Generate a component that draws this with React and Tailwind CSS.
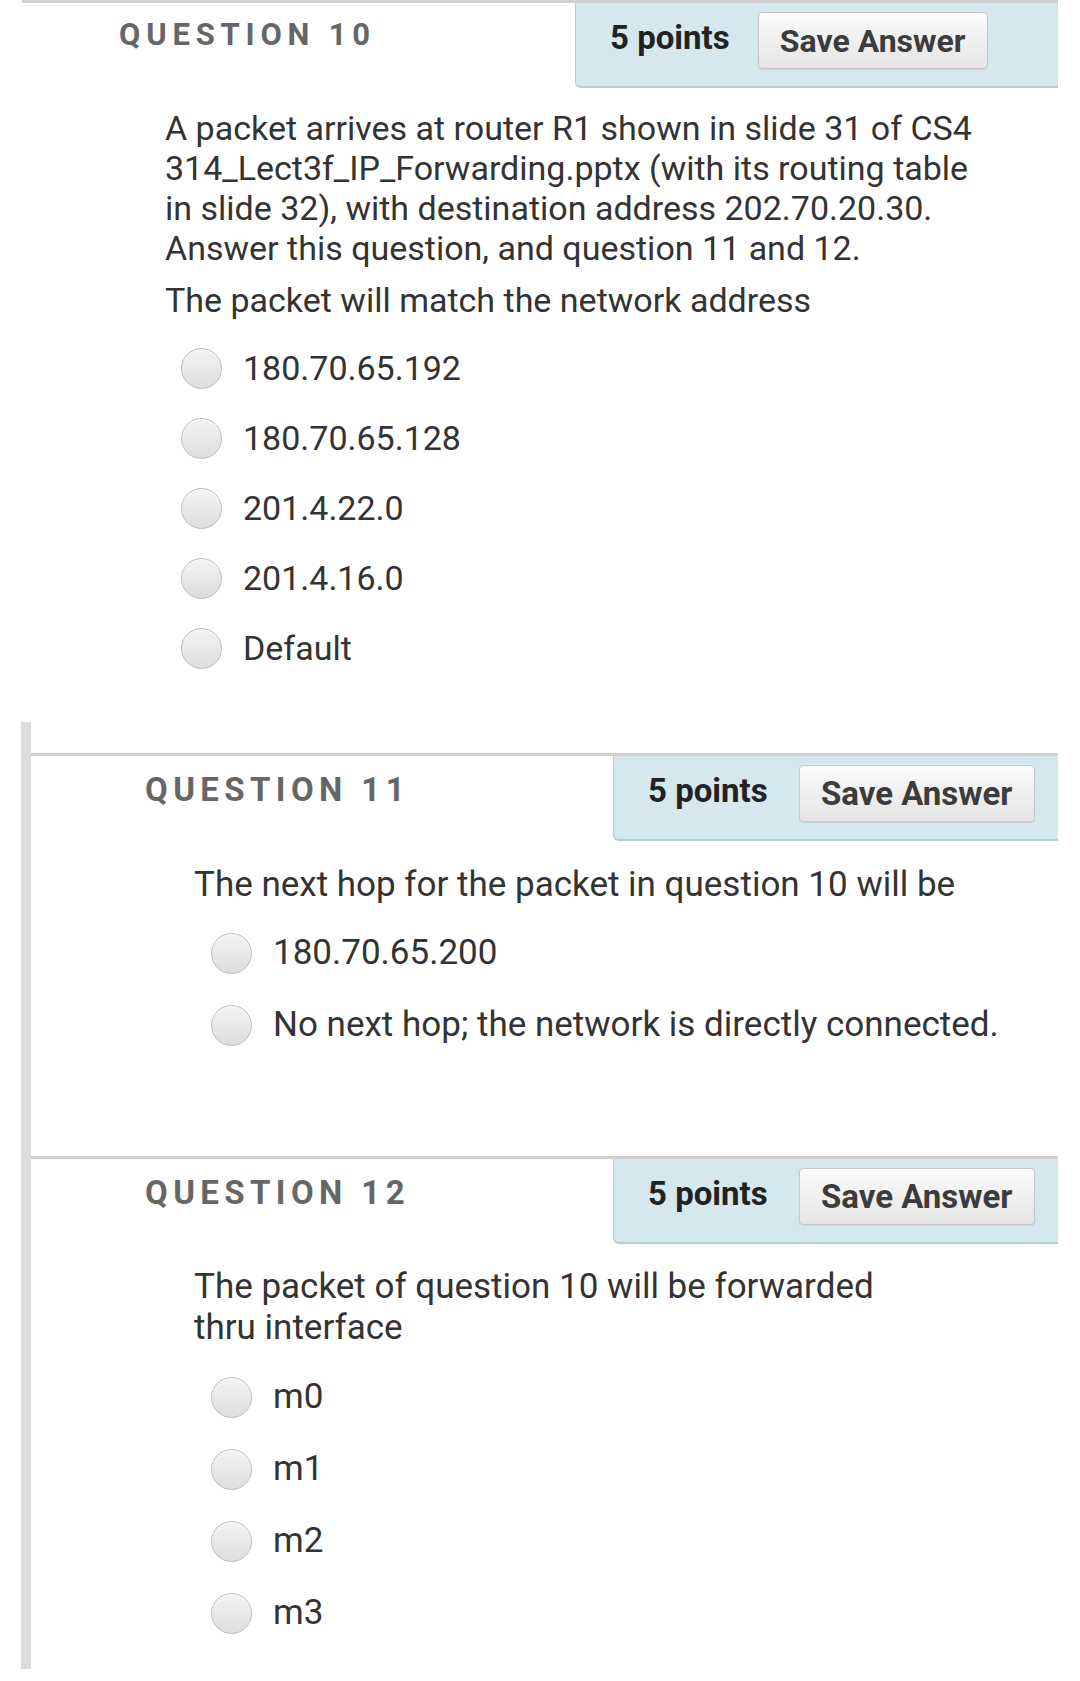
import React from "react";

const Radio = () => (
  <span className="block w-[41px] h-[41px] shrink-0 rounded-full border-[1.5px] border-[#bdbdbd] bg-gradient-to-b from-[#f4f4f4] to-[#dddddd] shadow-[inset_0_1px_1px_rgba(255,255,255,0.8)]" />
);

const Option = ({ label, rowH, textSize, gap }) => (
  <div className={`flex items-center ${rowH}`}>
    <Radio />
    <span className={`${textSize} ${gap} text-[#333]`}>{label}</span>
  </div>
);

const PointsPanel = ({ width, pad, gap, btnW, btnText }) => (
  <div
    className={`${width} h-[85px] bg-[#d4e8ee] border-b-2 border-l border-[#b7cdd4] rounded-bl-md flex items-start pt-[9px] ${pad}`}
  >
    <div className={`flex items-center h-[57px] ${gap}`}>
      <span className="text-[33px] font-bold text-[#222] leading-none pb-[6px]">
        5 points
      </span>
      <button
        className={`${btnW} ${btnText} h-[57px] rounded-[4px] border border-[#c6c6c6] bg-gradient-to-b from-[#fbfbfb] to-[#e5e5e5] font-bold text-[#3c3c3c] leading-none shadow-[0_1px_1px_rgba(0,0,0,0.08)]`}
      >
        Save Answer
      </button>
    </div>
  </div>
);

export default function App() {
  const q10 = ["180.70.65.192", "180.70.65.128", "201.4.22.0", "201.4.16.0", "Default"];
  const q12 = ["m0", "m1", "m2", "m3"];

  return (
    <div className="w-[1080px] h-[1681px] bg-white overflow-hidden font-['Roboto',sans-serif]">
      {/* question 10 */}
      <div className="mx-[22px] border-t-[3px] border-[#cfcfcf]">
        <div className="flex items-start justify-between">
          <h2 className="pl-[97px] pt-[16px] text-[31px] font-bold tracking-[5.8px] text-[#666] leading-none">
            QUESTION 10
          </h2>
          <PointsPanel
            width="w-[483px]"
            pad="pl-[34px]"
            gap="gap-[28px]"
            btnW="w-[230px]"
            btnText="text-[32px]"
          />
        </div>
        <div className="pl-[143px] pt-[20px] text-[34px] leading-[40px] text-[#333]">
          <p>
            A packet arrives at router R1 shown in slide 31 of CS4
            <br />
            314_Lect3f_IP_Forwarding.pptx (with its routing table
            <br />
            in slide 32), with destination address 202.70.20.30.
            <br />
            Answer this question, and question 11 and 12.
          </p>
          <p className="mt-[12px]">The packet will match the network address</p>
        </div>
        <div className="pl-[159px] mt-[13px]">
          {q10.map((o) => (
            <Option key={o} label={o} rowH="h-[70px]" textSize="text-[34px]" gap="ml-[21px]" />
          ))}
        </div>
      </div>

      {/* questions 11 and 12 */}
      <div className="ml-[21px] w-[1037px] mt-[39px] border-l-[10px] border-[#dcdcdc] pt-[31px] pb-[20px]">
        <div className="border-t-[3px] border-[#cfcfcf]">
          <div className="flex items-start justify-between">
            <h2 className="pl-[114px] pt-[17px] text-[33px] font-bold tracking-[5.4px] text-[#666] leading-none">
              QUESTION 11
            </h2>
            <PointsPanel
              width="w-[445px]"
              pad="pl-[34px]"
              gap="gap-[31px]"
              btnW="w-[236px]"
              btnText="text-[33px]"
            />
          </div>
          <p className="pl-[163px] mt-[24px] text-[35px] leading-[40px] text-[#333]">
            The next hop for the packet in question 10 will be
          </p>
          <div className="pl-[180px] mt-[12px]">
            <Option label="180.70.65.200" rowH="h-[72px]" textSize="text-[35px]" gap="ml-[21px]" />
            <Option
              label="No next hop; the network is directly connected."
              rowH="h-[72px]"
              textSize="text-[35px]"
              gap="ml-[21px]"
            />
          </div>
        </div>

        <div className="mt-[95px] border-t-[3px] border-[#cfcfcf]">
          <div className="flex items-start justify-between">
            <h2 className="pl-[114px] pt-[17px] text-[33px] font-bold tracking-[5.4px] text-[#666] leading-none">
              QUESTION 12
            </h2>
            <PointsPanel
              width="w-[445px]"
              pad="pl-[34px]"
              gap="gap-[31px]"
              btnW="w-[236px]"
              btnText="text-[33px]"
            />
          </div>
          <p className="pl-[163px] mt-[22px] text-[35px] leading-[41px] text-[#333]">
            The packet of question 10 will be forwarded
            <br />
            thru interface
          </p>
          <div className="pl-[180px] mt-[13px]">
            {q12.map((o) => (
              <Option key={o} label={o} rowH="h-[72px]" textSize="text-[35px]" gap="ml-[21px]" />
            ))}
          </div>
        </div>
      </div>
    </div>
  );
}
